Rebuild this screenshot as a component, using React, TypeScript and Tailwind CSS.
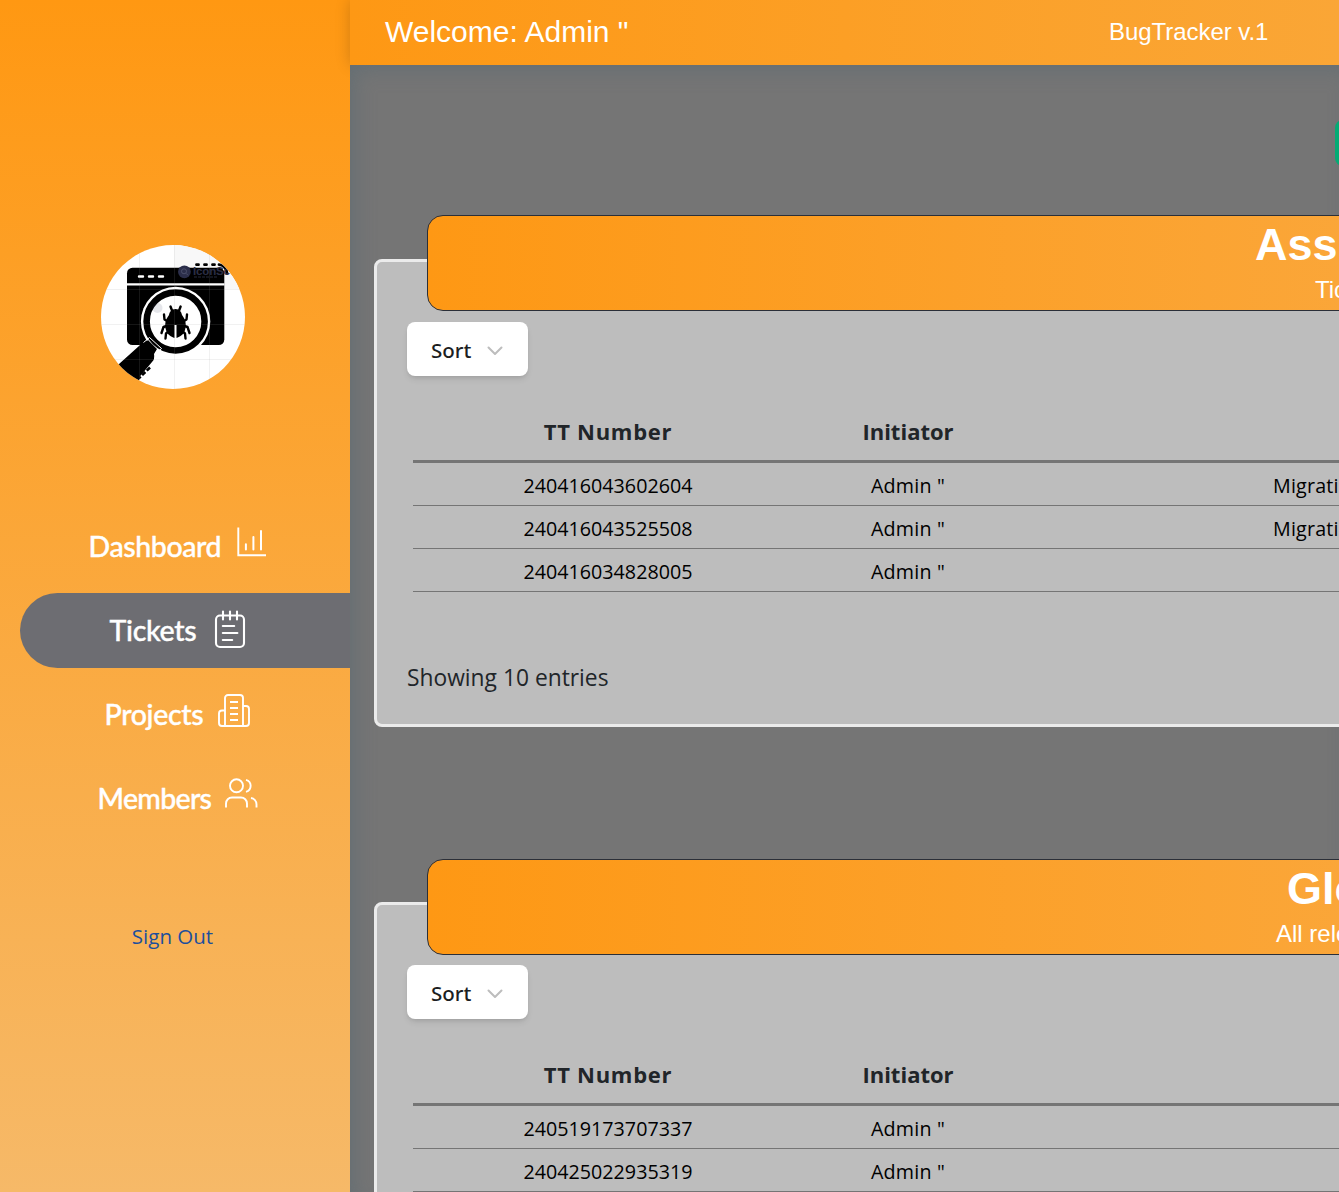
import React from "react";

function Logo() {
  return (
    <svg viewBox="0 0 144 144" className="block h-36 w-36">
      <defs>
        <clipPath id="disc">
          <circle cx="72" cy="72" r="72" />
        </clipPath>
      </defs>
      <g clipPath="url(#disc)">
        <rect width="144" height="144" fill="#fff" />
        <rect x="73" y="0" width="71" height="44" fill="#f8f8f8" />
        <rect x="26" y="22.7" width="97.3" height="77.3" rx="5.5" fill="#000" />
        <path d="M26 39.3H123.5" stroke="#fff" strokeWidth="2.2" />
        <path d="M38 31.5h4M48 31.5h4M58 31.5h4" stroke="#fff" strokeWidth="2.4" strokeLinecap="round" />
        <path d="M95.5 19.7h2M103.5 19.7h2M111.5 19.7h2M118 19.7c4 .3 7 3 8 8" stroke="#000" strokeWidth="2.8" strokeLinecap="round" fill="none" />
        <circle cx="83.4" cy="26.8" r="6.4" fill="#2b2e4a" />
        <circle cx="83" cy="26.3" r="2.5" fill="none" stroke="#50536f" strokeWidth="0.9" />
        <path d="M85 28.3l2 2" stroke="#50536f" strokeWidth="0.9" />
        <text x="92" y="29.5" fontSize="11.5" fontWeight="700" fill="#2b2e45" fontFamily="Liberation Sans, sans-serif" textLength="37">IconSc</text>
        <path d="M93 32h24" stroke="#272a3c" strokeWidth="1.2" strokeDasharray="3 1" />
        <circle cx="74.6" cy="76.5" r="34.7" fill="#fff" />
        <circle cx="74.6" cy="76.5" r="29" fill="#fff" stroke="#000" strokeWidth="6.6" />
        <circle cx="56.5" cy="63" r="5" fill="#4a4d6a" fillOpacity="0.14" />
        <path d="M38 101q1-2 5-2l4-4 9 9-3 5q1 5-2 8L30 142 8 128Z" fill="#000" />
        <path d="M42.500 97.500l6-5 12 11-5.500 5" fill="none" stroke="#fff" strokeWidth="1" />
        <path d="M49 122.5L34 137" stroke="#000" strokeWidth="2.6" strokeDasharray="4.500 2" />
        <path d="M69.5 61.5l1.500 4M79.600 61.500l-1.500 4M63 69.500l.5 5 5 3M86 69.500l-.5 5-5 3M60.500 88l2-6 6-2M88.500 88l-2-6-6-2M64.500 93.500l.5-5 5-4M84.500 93.500l-.5-5-5-4" stroke="#000" strokeWidth="2.4" strokeLinecap="round" strokeLinejoin="round" fill="none" />
        <path d="M74.5 64c4 0 6 3 6.500 6 4 5 4.500 10 3 15-1 4-5 7.500-9.500 8-4.500-.5-8.500-4-9.500-8-1.500-5-1-10 3-15 .5-3 2.500-6 6.500-6Z" fill="#000" />
        <path d="M74.5 80v13" stroke="#fff" strokeWidth="2" />
        <path d="M38.5 0V144M73.5 0V144M108.5 0V144M0 44.5H144M0 79.5H144M0 114.5H144" stroke="#999" strokeOpacity="0.18" strokeWidth="0.8" />
      </g>
    </svg>
  );
}

function ChartIcon() {
  return (
    <svg viewBox="0 0 32 32" className="h-8 w-8" fill="none" stroke="white">
      <path d="M3.3 2.5V30.2H31" strokeWidth="1.9" />
      <path d="M10.9 19.2v5.300M18.400 12v12.500M26 6v18.500" strokeWidth="2" strokeLinecap="round" />
    </svg>
  );
}

function NotesIcon() {
  return (
    <svg viewBox="0 0 32 40" className="h-10 w-8" fill="none" stroke="white" strokeWidth="2.1" strokeLinecap="round">
      <rect x="2" y="6.5" width="28" height="31.5" rx="4" />
      <path d="M9 2.500v8M16 2.500v8M23 2.500v8M8.800 17h11.400M8.800 24h14.600M8.800 31h9.400" />
    </svg>
  );
}

function BuildingIcon() {
  return (
    <svg viewBox="0 0 34 34" className="h-[34px] w-[34px]" fill="none" stroke="white" strokeWidth="1.9" strokeLinecap="round">
      <path d="M8 32V4a3 3 0 0 1 3-3h12a3 3 0 0 1 3 3v28M8 16.500H5a3 3 0 0 0-3 3V29a3 3 0 0 0 3 3h24a3 3 0 0 0 3-3V15a3 3 0 0 0-3-3h-3" />
      <path d="M13 8h8M13 14h8M13 20h8M13 26h8" strokeLinecap="butt" />
    </svg>
  );
}

function MembersIcon() {
  return (
    <svg viewBox="0 0 34 32" className="h-8 w-[34px]" fill="none" stroke="white" strokeWidth="1.9">
      <circle cx="12.5" cy="8.8" r="6.5" />
      <path d="M22 2.800a6.200 6.200 0 0 1 0 12M2 30.500v-4a6 6 0 0 1 6-6h9a6 6 0 0 1 6 6v4M27 21a6.500 6.500 0 0 1 5.500 6.200v3.300" />
    </svg>
  );
}

function NavItem({ label, text, icon, active = false, lift }: { label: string; text: string; icon: React.ReactNode; active?: boolean; lift: string }) {
  return (
    <div className={`flex h-[75px] items-center justify-center ${active ? "ml-5 rounded-l-full bg-[#6d6d72] pr-[15px]" : "pl-[5px]"}`}>
      <span className={`${text} -mt-0.5 whitespace-nowrap font-['Lato'] text-[28.5px] font-medium leading-10 [-webkit-text-stroke:0.4px_white]`}>{label}</span>
      <span className={lift}>{icon}</span>
    </div>
  );
}

type Row = { id: string; who: string; project: string };

function TicketPanel({ title, titlePad, sub, subPad, rows, bannerGap }: { title: string; titlePad: string; sub: string; subPad: string; rows: Row[]; bannerGap: string }) {
  return (
    <section className="w-[1988px] rounded-lg border-[3px] border-[#ebebeb] bg-[#bdbdbd]">
      <div className={`${bannerGap} ml-[50px] h-24 w-[1888px] rounded-2xl border border-[#2b2f38] bg-linear-to-r/srgb from-[#fe9814] to-[#f7b55f] font-['Liberation_Sans'] text-white`}>
        <div className={`${titlePad} whitespace-nowrap pt-1 text-[45px] font-bold leading-[50px]`}>{title}</div>
        <div className={`${subPad} whitespace-nowrap pt-1 text-2xl leading-8`}>{sub}</div>
      </div>
      <button className="ml-[30px] flex h-[54px] w-[121px] items-center rounded-lg bg-white pl-6 pt-0.5 font-medium text-[#1c1e22] shadow-md">
        <span className="w-14 text-left font-['Noto_Sans'] text-[20.5px]">Sort</span>
        <svg viewBox="0 0 16 10" className="mt-px h-[10px] w-4" fill="none" stroke="#bdbdbd" strokeWidth="2" strokeLinecap="round" strokeLinejoin="round">
          <path d="M1.500 1.500L8 8l6.500-6.500" />
        </svg>
      </button>
      <table className="ml-9 mt-7 w-[1910px] table-fixed border-separate border-spacing-0 text-center">
        <colgroup>
          <col className="w-[390px]" />
          <col className="w-[210px]" />
          <col />
        </colgroup>
        <thead>
          <tr className="h-[59px] text-[22px] font-bold text-[#212529]">
            <th className="border-b-[3px] border-[#757575] p-0 pb-0.5 tracking-[0.7px]">TT Number</th>
            <th className="border-b-[3px] border-[#757575] p-0 pb-0.5">Initiator</th>
            <th className="border-b-[3px] border-[#757575] p-0" />
          </tr>
        </thead>
        <tbody>
          {rows.map((r) => (
            <tr key={r.id} className="h-[43px] text-[19.7px] text-black">
              <td className="border-b border-[#757575] p-0 pt-[3px]">{r.id}</td>
              <td className="border-b border-[#757575] p-0 pt-[3px] tracking-[0.2px]">{r.who}</td>
              <td className="border-b border-[#757575] p-0 pl-[260px] pt-[3px] text-left tracking-[0.2px]">{r.project}</td>
            </tr>
          ))}
        </tbody>
      </table>
      <div className="ml-[30px] mt-[68px] h-16 text-[22.8px] leading-9 text-[#212529]">Showing 10 entries</div>
    </section>
  );
}

const assigned: Row[] = [
  { id: "240416043602604", who: 'Admin "', project: "Migration" },
  { id: "240416043525508", who: 'Admin "', project: "Migration" },
  { id: "240416034828005", who: 'Admin "', project: "" },
];
const relevant: Row[] = [
  { id: "240519173707337", who: 'Admin "', project: "" },
  { id: "240425022935319", who: 'Admin "', project: "" },
];

export default function App() {
  return (
    <div className="flex h-[1192px] w-[1339px] overflow-hidden font-['Open_Sans']">
      <aside className="w-[350px] shrink-0 bg-linear-to-b/srgb from-[#ff9812] to-[#f6b968] text-white">
        <div className="ml-[101px] pt-[245px]">
          <Logo />
        </div>
        <nav className="mt-[120px] flex flex-col gap-[9px]">
          <NavItem label="Dashboard" text="w-[146px] tracking-[-0.4px]" icon={<ChartIcon />} lift="-mt-[11px]" />
          <NavItem label="Tickets" text="w-[104px] tracking-[-0.3px]" icon={<NotesIcon />} active lift="-mt-[3px]" />
          <NavItem label="Projects" text="w-[112px] tracking-[-0.35px]" icon={<BuildingIcon />} lift="-mt-[7px]" />
          <NavItem label="Members" text="w-[126px] tracking-[-0.7px]" icon={<MembersIcon />} lift="-mt-3" />
        </nav>
        <div className="mt-[84px] pr-[5px] text-center text-[20.5px] leading-8 text-[#1d4f9c]">Sign Out</div>
      </aside>
      <div className="flex min-w-0 flex-1 flex-col">
        <header className="flex h-[65px] shrink-0 items-center bg-linear-to-r/srgb from-[#fe9814] to-[#faa636] pb-0.5 pl-[35px] font-['Liberation_Sans'] text-white shadow-[0_0_14px_rgba(0,0,0,0.18)]">
          <span className="w-[724px] text-[30px]">Welcome: Admin "</span>
          <span className="whitespace-nowrap text-2xl tracking-[-0.05px]">BugTracker v.1</span>
        </header>
        <main className="flex-1 overflow-hidden bg-[#757575] pl-6 shadow-[inset_8px_8px_20px_-4px_rgba(95,108,115,0.75)]">
          <div className="ml-[961px] mt-[55px] h-[46px] w-40 rounded-lg bg-[#04ab74]" />
          <div className="mt-[93px] flex flex-col gap-[175px]">
            <TicketPanel title="Assigned Tickets" titlePad="pl-[827px]" sub="Tickets assigned to you" subPad="pl-[887px]" rows={assigned} bannerGap="-mt-[47px] mb-[11px]" />
            <TicketPanel title="Global Tickets" titlePad="pl-[859px]" sub="All relevant tickets" subPad="pl-[848px]" rows={relevant} bannerGap="-mt-[46px] mb-[10px]" />
          </div>
        </main>
      </div>
    </div>
  );
}
